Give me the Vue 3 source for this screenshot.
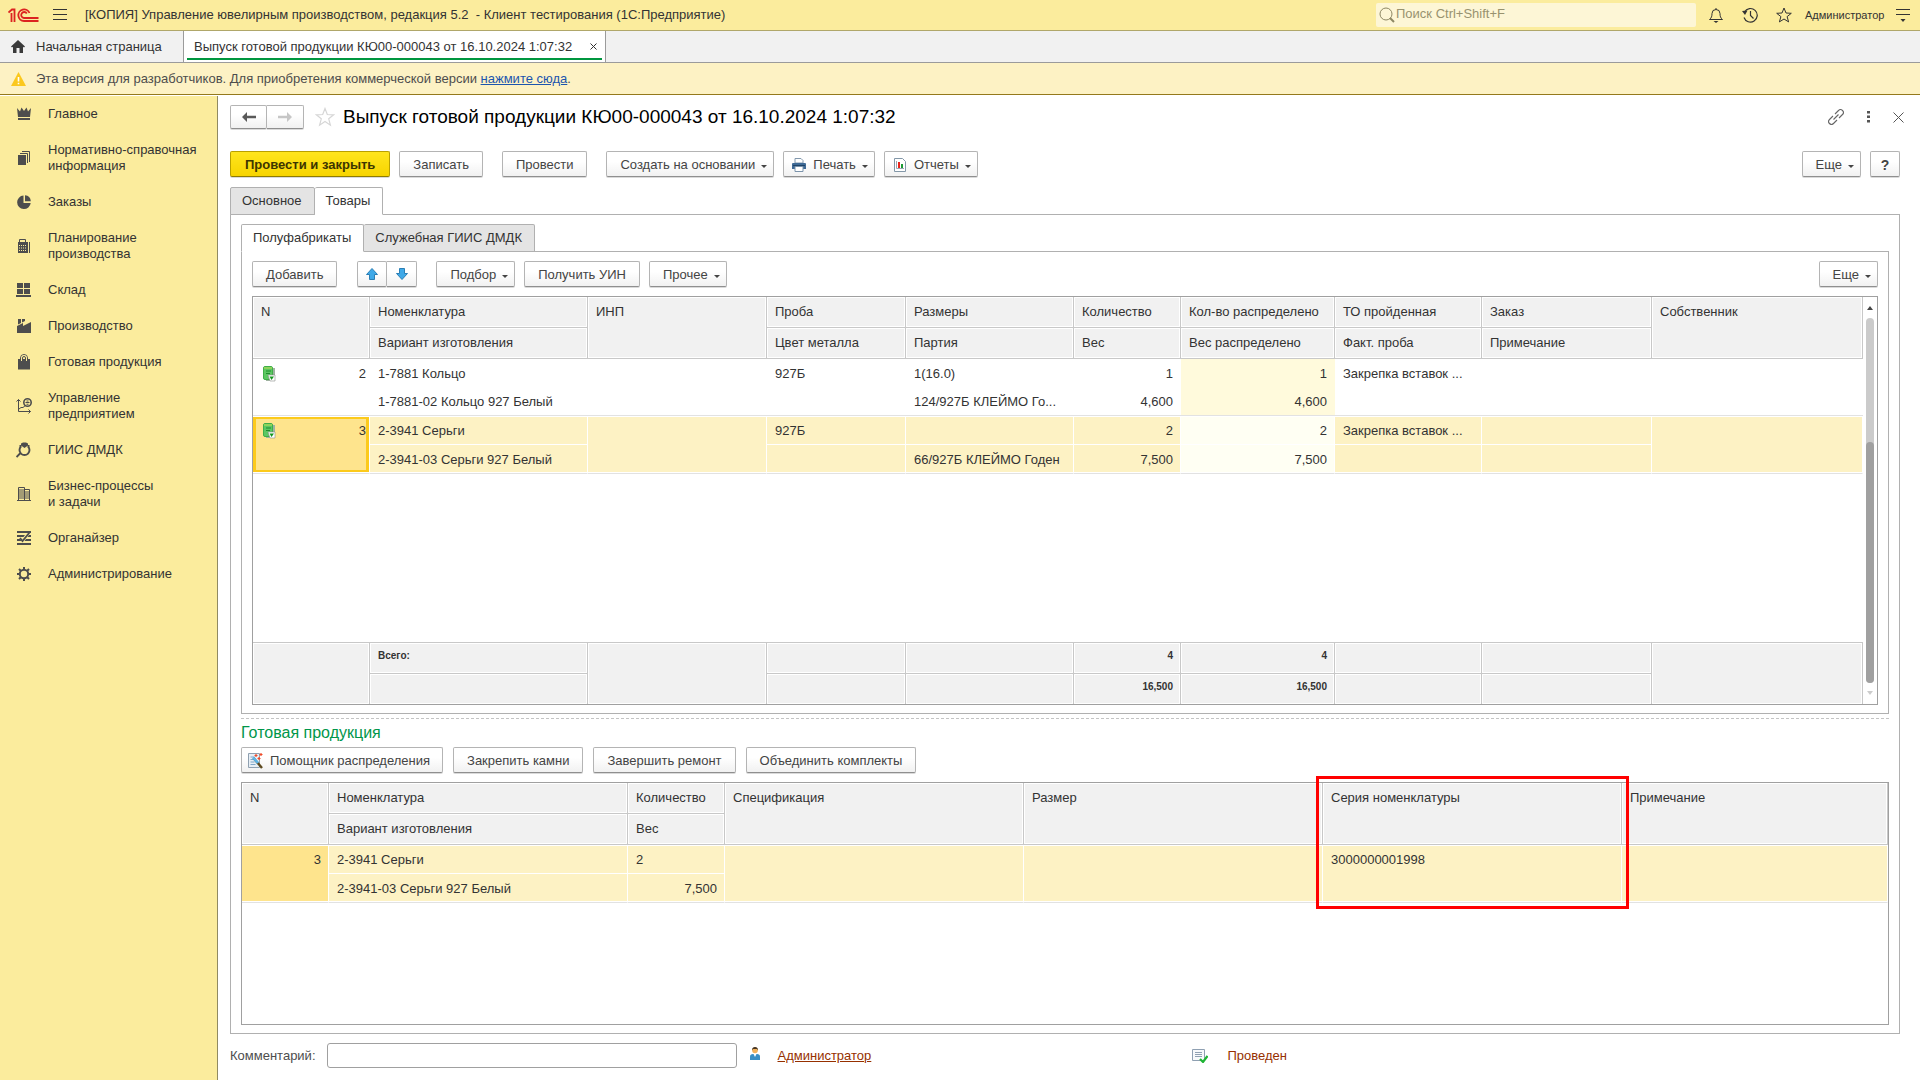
<script setup>
import { ref } from 'vue'

const search = ref('')
const comment = ref('')

const sections = [
  { title: ['Главное'], icon: '<path d="M1 2l3 3.500L5.500 1.500 8 5l2.500-3.500L12 5.500 15 2l-1 9H2z"/><path d="M2 12h12v2H2z"/>' },
  { title: ['Нормативно-справочная', 'информация'], icon: '<path d="M2 5h8v10H2z"/><path d="M4 3.500h7.500V13M6 1.500h7.500V12" fill="none" stroke="#4d4d4d"/>' },
  { title: ['Заказы'], icon: '<path d="M7.500 1.500A6.800 6.800 0 1 0 14.700 9H7.500z"/><path d="M9 1.200A6.500 6.500 0 0 1 14.800 7.200H9z"/>' },
  { title: ['Планирование', 'производства'], icon: '<path d="M3.500 5V1.500h6V5" fill="none" stroke="#4d4d4d"/><path fill-rule="evenodd" d="M2 4h10v11H2zM3 7v1h1V7zm2 0v1h1V7zm2 0v1h1V7zm2 0v1h1V7zM3 9.500v1h1v-1zm2 0v1h1v-1zm2 0v1h1v-1zm2 0v1h1v-1zM3 12v1h1v-1zm2 0v1h1v-1zm2 0v1h1v-1zm2 0v1h1v-1z"/><path d="M13 4h1v11h-1z"/>' },
  { title: ['Склад'], icon: '<path d="M1 1h6v5H1zM8 1h6v5H8zM1 7h6v5H1zM8 7h6v5H8zM0 13h15v2H0z"/>' },
  { title: ['Производство'], icon: '<path d="M2 1h3v4L2 6.500zM6 1h3v2L6 4.500z"/><path d="M1 8l6-3v3l8-4v11H1z"/>' },
  { title: ['Готовая продукция'], icon: '<path d="M2 5h12v10.500H2z"/><path d="M4.500 6V4a3.500 3.500 0 0 1 7 0v2" fill="none" stroke="#4d4d4d"/><path d="M5.500 7V4a2.500 2.500 0 0 1 5 0v3" fill="none" stroke="#fbec9d"/><path d="M6.500 5V4a1.500 1.500 0 0 1 3 0v1" fill="none" stroke="#4d4d4d"/>' },
  { title: ['Управление', 'предприятием'], icon: '<path d="M2.500 1.500v12h12M.500 3.500l2-2 2 2M12.500 11.500l2 2-2 2M3 11l2-1.500 2 0 3-2.500" fill="none" stroke="#4d4d4d"/><circle cx="11.500" cy="4.500" r="3.700" fill="none" stroke="#4d4d4d" stroke-width="1.600"/><path d="M9.500 4h4v1h-4zM10.500 2.500h2v1h-2zM10.500 5.700h2v1h-2z"/>' },
  { title: ['ГИИС ДМДК'], icon: '<path d="M5 1.500L7 .500h3l2 1v2L8.500 6 5 3.500z"/><path d="M5 4.500a5 5 0 1 0 7 0M3.500 4h2M11.500 4h2M4.500 11L.500 15" fill="none" stroke="#4d4d4d" stroke-width="1.900"/>' },
  { title: ['Бизнес-процессы', 'и задачи'], icon: '<path d="M2.500 14V1.500h6V14M9 3.500h4.500V14M3 4h5M3 6h5M3 8h5M3 10h5M3 12h5M9 6h4.500M9 8h4.500M9 10h4.500M9 12h4.500M1 14.500h14" fill="none" stroke="#4d4d4d"/>' },
  { title: ['Органайзер'], icon: '<path d="M1 1h14v2H1zM1 5h8L7.500 7H1zM1 9h3l1.500 2H1zM1 13h14v2H1zM13 5h2v2h-3.500zM10 9h5v2H8.500z"/><path d="M4 8l2.500 3L13.500 2.500" fill="none" stroke="#4d4d4d" stroke-width="1.800"/>' },
  { title: ['Администрирование'], icon: '<circle cx="8" cy="8" r="4.200" fill="none" stroke="#4d4d4d" stroke-width="2"/><path d="M8 1v3M8 12v3M1 8h3M12 8h3M3 3l2.200 2.200M10.800 10.800L13 13M3 13l2.200-2.200M10.800 5.200L13 3" stroke="#4d4d4d" stroke-width="2"/>' },
]

const goods = [
  {
    n: 2, name: '1-7881 Кольцо', variant: '1-7881-02 Кольцо 927 Белый', probe: '927Б', size: '1(16.0)',
    batch: '124/927Б КЛЕЙМО Го...', qty: '1', weight: '4,600', op: 'Закрепка вставок ...', selected: false,
  },
  {
    n: 3, name: '2-3941 Серьги', variant: '2-3941-03 Серьги 927 Белый', probe: '927Б', size: '',
    batch: '66/927Б КЛЕЙМО Годен', qty: '2', weight: '7,500', op: 'Закрепка вставок ...', selected: true,
  },
]
</script>

<template>
  <div class="app">
    <header class="titlebar">
      <svg class="logo" width="31" height="15" viewBox="0 0 31 15" fill="none" stroke="#dc2320" stroke-width="1.800">
        <path d="M.500 4.500L4 1.500h2.500V14M3.500 5v9" />
        <path d="M21.500 5A5.800 5.800 0 1 0 16 13h14.500" />
        <path d="M18.800 5.500A3 3 0 1 0 16 10h14.500" />
      </svg>
      <button class="plain burger" aria-label="Меню">
        <svg width="14" height="14" viewBox="0 0 14 14" stroke="#333"><path d="M0 1.500h14M0 6.500h14M0 11.500h14" /></svg>
      </button>
      <span class="app-name">[КОПИЯ] Управление ювелирным производством, редакция 5.2 &nbsp;- Клиент тестирования (1С:Предприятие)</span>
      <label class="search">
        <svg width="16" height="16" viewBox="0 0 16 16" fill="none" stroke="#8d8763">
          <circle cx="7" cy="7" r="6" /><path d="M11 11l4 4" stroke-width="2" />
        </svg>
        <input v-model="search" type="text" placeholder="Поиск Ctrl+Shift+F" aria-label="Поиск" />
      </label>
      <div class="title-tools">
        <button class="plain" aria-label="Уведомления">
          <svg width="16" height="16" viewBox="0 0 16 16" fill="none" stroke="#333">
            <path d="M8 1v1.500M1.500 12.500c2-1.500 2.500-3.500 2.500-6a4 4 0 0 1 8 0c0 2.500.500 4.500 2.500 6z" /><path d="M5.500 14h5L8 16z" fill="#333" stroke="none" />
          </svg>
        </button>
        <button class="plain" aria-label="История">
          <svg width="16" height="16" viewBox="0 0 16 16" fill="none" stroke="#333">
            <path d="M2.500 5A6.800 6.800 0 1 1 2 10.500M8.500 4v4.500l3 3" stroke-width="1.200" /><path d="M0 4l5.500-.500L3 8z" fill="#333" stroke="none" />
          </svg>
        </button>
        <button class="plain" aria-label="Избранное">
          <svg width="16" height="16" viewBox="0 0 16 16" fill="none" stroke="#333">
            <path d="M8 1l2 5 5.300.300-4.200 3.300 1.500 5.300L8 12l-4.600 2.900 1.500-5.300L.700 6.300 6 6z" />
          </svg>
        </button>
      </div>
      <span class="user">Администратор</span>
      <button class="plain" aria-label="Настройки">
        <svg width="14" height="14" viewBox="0 0 14 14"><path d="M0 1.500h14M0 6.500h14" stroke="#333" /><path d="M4.500 11h5L7 14z" fill="#333" /></svg>
      </button>
    </header>

    <nav class="windows">
      <a href="#" class="window home">
        <svg width="14" height="13" viewBox="0 0 14 13" fill="#3a3a3a"><path d="M7 0l7 6.500-1 1-1-.800V13H8.500V8h-3v5H2V6.700l-1 .800-1-1z" /></svg>
        <span>Начальная страница</span>
      </a>
      <a href="#" class="window current">
        <span>Выпуск готовой продукции КЮ00-000043 от 16.10.2024 1:07:32</span>
        <svg width="7" height="7" viewBox="0 0 7 7" stroke="#333"><path d="M.500.500l6 6M6.500.500l-6 6" /></svg>
      </a>
    </nav>

    <div class="notice">
      <svg width="15" height="14" viewBox="0 0 15 14"><path d="M7.500 0L15 14H0z" fill="#fbc81e" /><path d="M6.700 5h1.600v4.500H6.700zM6.700 10.700h1.600v1.600H6.700z" fill="#fff" /></svg>
      <span>Эта версия для разработчиков. Для приобретения коммерческой версии <a href="#">нажмите сюда</a>.</span>
    </div>

    <div class="workspace">
      <aside class="sidebar">
        <a v-for="s in sections" :key="s.title[0]" href="#" class="section">
          <svg width="16" height="16" viewBox="0 0 16 16" fill="#4d4d4d" v-html="s.icon"></svg>
          <span><span v-for="line in s.title" :key="line" class="line">{{ line }}</span></span>
        </a>
      </aside>

      <main class="doc">
        <div class="doc-head">
          <div class="pair nav">
            <button class="btn" aria-label="Назад"><svg width="14" height="10" viewBox="0 0 14 10" fill="#595959"><path d="M0 5l5-5v3.800h9v2.400H5V10z" /></svg></button>
            <button class="btn" aria-label="Вперед"><svg width="14" height="10" viewBox="0 0 14 10" fill="#c6c6c6"><path d="M14 5L9 0v3.800H0v2.400h9V10z" /></svg></button>
          </div>
          <svg class="fav" width="20" height="20" viewBox="0 0 20 20" fill="none" stroke="#d6d6d6" stroke-width="1.200"><path d="M10 1.500l2.300 6 6.400.300-5 4 1.700 6.400L10 14.500l-5.400 3.700 1.700-6.400-5-4 6.400-.300z" /></svg>
          <h1>Выпуск готовой продукции КЮ00-000043 от 16.10.2024 1:07:32</h1>
          <div class="doc-tools">
            <button class="plain" aria-label="Ссылка">
              <svg width="16" height="16" viewBox="0 0 16 16" fill="none" stroke="#666"><path d="M7 5l3.500-3.500a2.800 2.800 0 0 1 4 4L11 9M9 11l-3.500 3.500a2.800 2.800 0 0 1-4-4L5 7M5.500 10.500l5-5" stroke-width="1.100" /></svg>
            </button>
            <button class="plain" aria-label="Действия">
              <svg width="3" height="12" viewBox="0 0 3 12" fill="#555"><path d="M0 0h3v2.500H0zM0 4.500h3V7H0zM0 9h3v2.500H0z" /></svg>
            </button>
            <button class="plain" aria-label="Закрыть">
              <svg width="11" height="11" viewBox="0 0 11 11" stroke="#555"><path d="M.500.500l10 10M10.500.500l-10 10" /></svg>
            </button>
          </div>
        </div>

        <div class="toolbar commands">
          <button class="btn primary">Провести и закрыть</button>
          <button class="btn">Записать</button>
          <button class="btn apart">Провести</button>
          <button class="btn apart menu">Создать на основании<i class="caret"></i></button>
          <button class="btn menu iconed">
            <svg width="14" height="14" viewBox="0 0 14 14"><path d="M3 .500h6l2 2V5H3z" fill="#fff" stroke="#8298ad" /><path d="M0 5.500Q0 5 1 5h12q1 0 1 .500V11H0z" fill="#3f6a96" /><path d="M1 7h12v1H1z" fill="#1f4468" /><path d="M3 8.500h8v5H3z" fill="#fff" stroke="#7b93ab" /></svg>
            Печать<i class="caret"></i>
          </button>
          <button class="btn menu iconed">
            <svg width="14" height="14" viewBox="0 0 14 14"><path d="M1.500.500h8l3 3v10h-11z" fill="#fff" stroke="#8397a8" /><path d="M3.500 3v7.500H11" fill="none" stroke="#9aa8b4" /><path d="M5 4h2v6H5z" fill="#e8251c" /><path d="M8 6h2v4H8z" fill="#1a9a33" /></svg>
            Отчеты<i class="caret"></i>
          </button>
          <span class="grow"></span>
          <button class="btn menu">Еще<i class="caret"></i></button>
          <button class="btn help">?</button>
        </div>

        <div class="tabs">
          <button class="tab">Основное</button>
          <button class="tab active">Товары</button>
        </div>
        <section class="panel outer">
          <div class="tabs">
            <button class="tab active">Полуфабрикаты</button>
            <button class="tab">Служебная ГИИС ДМДК</button>
          </div>
          <div class="panel inner">
            <div class="toolbar">
              <button class="btn">Добавить</button>
              <div class="pair arrows">
                <button class="btn" aria-label="Вверх"><svg width="12" height="12" viewBox="0 0 12 12"><path d="M6 .500L11.500 6.500H8.500v5h-5v-5H.500z" fill="#3fa9e8" stroke="#2b7fb5" /></svg></button>
                <button class="btn" aria-label="Вниз"><svg width="12" height="12" viewBox="0 0 12 12"><path d="M6 11.500L11.500 5.500H8.500v-5h-5v5H.500z" fill="#3fa9e8" stroke="#2b7fb5" /></svg></button>
              </div>
              <button class="btn menu">Подбор<i class="caret"></i></button>
              <button class="btn">Получить УИН</button>
              <button class="btn menu">Прочее<i class="caret"></i></button>
              <span class="grow"></span>
              <button class="btn menu">Еще<i class="caret"></i></button>
            </div>

            <div class="grid-box">
              <table class="grid goods">
                <colgroup>
                  <col class="g-n" /><col class="g-name" /><col class="g-inp" /><col class="g-probe" /><col class="g-size" />
                  <col class="g-qty" /><col class="g-dist" /><col class="g-op" /><col class="g-order" /><col class="g-owner" />
                </colgroup>
                <thead>
                  <tr>
                    <th rowspan="2">N</th><th>Номенклатура</th><th rowspan="2">ИНП</th><th>Проба</th><th>Размеры</th>
                    <th>Количество</th><th>Кол-во распределено</th><th>ТО пройденная</th><th>Заказ</th><th rowspan="2">Собственник</th>
                  </tr>
                  <tr>
                    <th>Вариант изготовления</th><th>Цвет металла</th><th>Партия</th><th>Вес</th>
                    <th>Вес распределено</th><th>Факт. проба</th><th>Примечание</th>
                  </tr>
                </thead>
                <tbody v-for="g in goods" :key="g.n" :class="{ selected: g.selected }">
                  <tr class="upper">
                    <td rowspan="2" class="mark">
                      <div class="mark-row">
                        <svg width="13" height="16" viewBox="0 0 13 16"><path d="M2 2h10v13H3z" fill="#9fb3a0" /><rect x=".5" y=".5" width="9" height="13" rx="1.500" fill="#5cc763" stroke="#3fae49" /><path d="M1 1h8v2H1z" fill="#8fd35c" /><path d="M3 5h5M3 7.500h4" stroke="#1f8a2e" /><path d="M5 9h7v6H7z" fill="#fff" stroke="#8b8f8b" stroke-width=".6" /><path d="M6.500 10.500L8.500 14l2.500-3.500z" fill="#14961f" /></svg>
                        <span>{{ g.n }}</span>
                      </div>
                    </td>
                    <td>{{ g.name }}</td><td rowspan="2"></td><td>{{ g.probe }}</td><td>{{ g.size }}</td>
                    <td class="num">{{ g.qty }}</td><td class="num dist">{{ g.qty }}</td><td>{{ g.op }}</td><td></td><td rowspan="2"></td>
                  </tr>
                  <tr class="lower">
                    <td>{{ g.variant }}</td><td></td><td>{{ g.batch }}</td>
                    <td class="num">{{ g.weight }}</td><td class="num dist">{{ g.weight }}</td><td></td><td></td>
                  </tr>
                </tbody>
                <tbody><tr class="blank"><td colspan="10"></td></tr></tbody>
                <tfoot>
                  <tr>
                    <td rowspan="2"></td><td>Всего:</td><td rowspan="2"></td><td></td><td></td>
                    <td class="num">4</td><td class="num">4</td><td></td><td></td><td rowspan="2"></td>
                  </tr>
                  <tr>
                    <td></td><td></td><td></td><td class="num">16,500</td><td class="num">16,500</td><td></td><td></td>
                  </tr>
                </tfoot>
              </table>
              <div class="scroll">
                <svg width="6" height="4" viewBox="0 0 6 4" fill="#444"><path d="M0 4l3-4 3 4z" /></svg>
                <div class="track"><div class="thumb"></div></div>
                <svg width="6" height="4" viewBox="0 0 6 4" fill="#ccc"><path d="M0 0l3 4 3-4z" /></svg>
              </div>
            </div>
          </div>

          <div class="splitter"></div>
          <h2>Готовая продукция</h2>
          <div class="toolbar products">
            <button class="btn helper">
              <svg width="16" height="16" viewBox="0 0 16 16"><path d="M.500.500h11v14H.500z" fill="#e8eff5" stroke="#8fa0b0" /><path d="M2.500 4h4M2.500 6.500h4M2.500 9h4M2.500 11.500h5" stroke="#7fa6c9" /><path d="M5.500 5L14 15" stroke="#5d4a20" stroke-width="2.400" /><path d="M5 4.500l5 5.500" stroke="#5bb4e8" stroke-width="2.600" /><path d="M8 1v3M6.500 2.500h3M13 0v3M11.500 1.500h3M11 4v3M9.500 5.500h3" stroke="#ef4b2a" stroke-width="1.200" /></svg>
              Помощник распределения
            </button>
            <button class="btn">Закрепить камни</button>
            <button class="btn">Завершить ремонт</button>
            <button class="btn">Объединить комплекты</button>
          </div>
          <div class="grid-box fill">
            <table class="grid">
              <colgroup>
                <col class="p-n" /><col class="p-wide" /><col class="p-qty" /><col class="p-wide" /><col class="p-wide" /><col class="p-wide" /><col class="p-note" />
              </colgroup>
              <thead>
                <tr>
                  <th rowspan="2">N</th><th>Номенклатура</th><th>Количество</th><th rowspan="2">Спецификация</th><th rowspan="2">Размер</th>
                  <th rowspan="2" class="series">Серия номенклатуры<div class="frame"></div></th><th rowspan="2">Примечание</th>
                </tr>
                <tr><th>Вариант изготовления</th><th>Вес</th></tr>
              </thead>
              <tbody class="selected">
                <tr class="upper">
                  <td rowspan="2" class="num key">3</td><td>2-3941 Серьги</td><td>2</td><td rowspan="2"></td><td rowspan="2"></td>
                  <td rowspan="2">3000000001998</td><td rowspan="2"></td>
                </tr>
                <tr class="lower"><td>2-3941-03 Серьги 927 Белый</td><td class="num">7,500</td></tr>
              </tbody>
            </table>
          </div>
        </section>

        <footer class="foot">
          <label for="comment">Комментарий:</label>
          <input id="comment" v-model="comment" type="text" />
          <svg class="person" width="10" height="13" viewBox="0 0 10 13"><path d="M0 13V9.500Q0 7 3 7h4q3 0 3 2.500V13z" fill="#3a8fc4" /><path d="M3.500 7h3L5 10z" fill="#fff" /><circle cx="5" cy="3.500" r="2.800" fill="#f2b25c" /><path d="M2 3.500Q1.800 0 5 0t3 3.500L7 2H3z" fill="#4a3520" /></svg>
          <a href="#" class="author">Администратор</a>
          <span class="status">
            <svg width="16" height="14" viewBox="0 0 16 14"><path d="M.500.500h12v11H.500z" fill="#f7f9fb" stroke="#8fa0b2" /><path d="M3 3.500h7M3 5.500h7M3 7.500h7" stroke="#8fa0b2" /><path d="M8 10l3 3 4.500-6" fill="none" stroke="#1fb535" stroke-width="2.200" /></svg>
            <span>Проведен</span>
          </span>
        </footer>
      </main>
    </div>
  </div>
</template>

<style>
body {
  margin: 0;
  background: #fff;
}
</style>

<style scoped>
* {
  box-sizing: border-box;
}
.app {
  min-height: 100vh;
  display: flex;
  flex-direction: column;
  font: 13px/16px "Liberation Sans", Arial, sans-serif;
  color: #333;
}
svg {
  display: block;
  flex: none;
}
button, input {
  font: inherit;
  color: inherit;
}
.plain {
  padding: 0;
  border: 0;
  background: none;
}
.titlebar {
  display: flex;
  align-items: center;
  height: 31px;
  padding: 0 10px 0 8px;
  background: #fbec9d;
  border-bottom: 1px solid #b0a76a;
}
.burger {
  margin: 0 18px 0 14px;
}
.app-name {
  flex: 1;
  white-space: nowrap;
}
.search {
  display: flex;
  align-items: center;
  width: 320px;
  height: 24px;
  padding-left: 3px;
  background: #fdf6d6;
  border-radius: 2px;
}
.search input {
  flex: 1;
  min-width: 0;
  padding: 0 0 2px 1px;
  border: 0;
  background: none;
  outline: 0;
}
.search input::placeholder {
  color: #98926f;
  opacity: 1;
}
.title-tools {
  display: flex;
  gap: 18px;
  margin: 0 13px 0 12px;
}
.user {
  width: 78px;
  margin-right: 13px;
  font-size: 11px;
}
.windows {
  display: flex;
  height: 32px;
  background: #f1f1f1;
  border-bottom: 1px solid #9b9b9b;
}
.window {
  display: flex;
  align-items: center;
  color: inherit;
  text-decoration: none;
  white-space: nowrap;
  border-right: 1px solid #9b9b9b;
}
.home {
  gap: 11px;
  width: 184px;
  padding-left: 11px;
}
.current {
  position: relative;
  gap: 18px;
  padding: 0 8px 0 10px;
  background: #fff;
}
.current::after {
  content: "";
  position: absolute;
  left: 3px;
  right: 3px;
  bottom: 2px;
  height: 2px;
  background: #00963f;
}
.notice {
  display: flex;
  align-items: center;
  gap: 10px;
  height: 32px;
  padding-left: 11px;
  color: #4d4d4d;
  background: #fdf2c4;
  border-bottom: 1px solid #94791c;
}
.notice a {
  color: #1c55ae;
}
.workspace {
  flex: 1;
  display: flex;
}
.sidebar {
  width: 218px;
  flex: none;
  margin-top: 1px;
  background: #fbec9d;
  border-right: 1px solid #908a62;
}
.section {
  display: flex;
  align-items: center;
  gap: 16px;
  padding: 10px 0 10px 16px;
  color: inherit;
  text-decoration: none;
}
.line {
  display: block;
}
.doc {
  flex: 1;
  min-width: 0;
  display: flex;
  flex-direction: column;
  padding: 10px 20px 12px 12px;
}
.doc-head {
  display: flex;
  align-items: center;
  height: 24px;
  margin-bottom: 22px;
}
h1 {
  flex: 1;
  margin: 0;
  font-size: 19px;
  line-height: 24px;
  font-weight: normal;
  color: #000;
}
.fav {
  margin: 0 8px 0 11px;
}
.doc-tools {
  display: flex;
  align-items: center;
  gap: 23px;
  margin-right: -4px;
}
.btn {
  display: flex;
  align-items: center;
  justify-content: center;
  height: 26px;
  padding: 1px 13px 0;
  color: #444;
  white-space: nowrap;
  background: linear-gradient(#fff 40%, #f1f1f1);
  border: 1px solid #b4b4b4;
  border-bottom-color: #8f8f8f;
  border-radius: 2px;
  box-shadow: 0 1px 0 #dadada;
}
.primary {
  padding: 1px 14px 0;
  font-weight: bold;
  color: #3d3500;
  background: linear-gradient(#ffe51e, #f7d400);
  border-color: #b9a000;
  border-bottom-color: #8f7c00;
}
.menu {
  padding-right: 6px;
}
.caret {
  margin: 3px 0 0 6px;
  border: 3px solid transparent;
  border-top-color: #444;
  border-bottom: 0;
}
.iconed {
  padding-left: 8px;
}
.iconed svg {
  margin-right: 7px;
}
.help {
  width: 30px;
  padding: 1px 0 0;
  font-size: 14px;
  font-weight: bold;
}
.pair {
  display: flex;
}
.pair .btn {
  padding: 0;
}
.pair .btn + .btn {
  border-left: 0;
  border-radius: 0 2px 2px 0;
}
.nav .btn {
  width: 37px;
  height: 24px;
}
.arrows {
  margin: 0 10px 0 11px;
}
.arrows .btn {
  width: 30px;
}
.toolbar {
  display: flex;
  gap: 9px;
}
.apart {
  margin-left: 10px;
}
.grow {
  flex: 1;
}
.commands {
  margin-bottom: 10px;
}
.tabs {
  display: flex;
  position: relative;
  margin-bottom: -1px;
}
.tab {
  height: 28px;
  padding: 0 12px 0 11px;
  border: 1px solid #b0b0b0;
  background: #e4e4e4;
  border-radius: 2px 2px 0 0;
}
.tab + .tab {
  border-left: 0;
}
.tab.active {
  background: #fff;
  border-bottom-color: #fff;
}
.panel {
  border: 1px solid #b0b0b0;
}
.outer {
  flex: 1;
  display: flex;
  flex-direction: column;
  padding: 9px 10px 8px;
}
.inner {
  padding: 9px 10px 8px;
}
.grid-box {
  display: flex;
  align-items: flex-start;
  margin-top: 9px;
  border: 1px solid #a0a0a0;
}
.fill {
  flex: 1;
}
.grid {
  flex: 1;
  width: 100%;
  table-layout: fixed;
  border-collapse: separate;
  border-spacing: 0;
}
.g-n { width: 117px; }
.g-name { width: 218px; }
.g-inp { width: 179px; }
.g-probe { width: 139px; }
.g-size { width: 168px; }
.g-qty { width: 107px; }
.g-dist { width: 154px; }
.g-op { width: 147px; }
.g-order { width: 170px; }
.g-owner { width: 211px; }
.p-n { width: 87px; }
.p-wide { width: 299px; }
.p-qty { width: 97px; }
.p-note { width: 266px; }
th, td {
  height: 31px;
  padding: 2px 7px 0 8px;
  line-height: 26px;
  text-align: left;
  vertical-align: top;
  font-weight: normal;
  white-space: nowrap;
}
th {
  padding-top: 0;
  line-height: 30px;
  background: #f1f1f1;
  border-right: 1px solid #c8c8c8;
  border-bottom: 1px solid #c8c8c8;
  box-shadow: inset 0 0 0 1px #fff;
}
.num {
  text-align: right;
}
td.num {
  padding-right: 8px;
}
.upper td {
  height: 28px;
}
.lower td {
  height: 29px;
}
.lower td, .upper td[rowspan] {
  border-bottom: 1px solid #e2e2e2;
}
.dist {
  background: #fffadc;
}
.selected .upper td {
  height: 29px;
}
.selected td {
  background: #fdf2c4;
  border-right: 1px solid #fff;
  box-shadow: inset 0 -1px 0 #fff;
}
.selected .upper td {
  box-shadow: inset 0 1px 0 #fff, inset 0 -1px 0 #fff;
}
.selected td.num {
  padding-right: 7px;
}
.selected .dist {
  background: #fffff3;
}
.upper .mark {
  padding: 2px 0 0;
}
.mark-row {
  display: flex;
  justify-content: space-between;
  align-items: center;
  height: 26px;
  padding: 0 4px 0 10px;
}
.selected .upper .mark {
  background: #fee48d;
  box-shadow: inset 0 1px 0 #fff, inset 0 -1px 0 #fff, inset 0 0 0 3px #fcca1c;
}
.selected .mark-row {
  padding-right: 3px;
}
.selected .key {
  background: #fee48d;
}
.goods .blank td {
  height: 168px;
}
tfoot td {
  padding-top: 0;
  font-size: 10px;
  font-weight: bold;
  background: #f1f1f1;
  border-top: 1px solid #c8c8c8;
  border-right: 1px solid #c8c8c8;
  box-shadow: inset 0 0 0 1px #fff;
}
tfoot td.num {
  padding-right: 7px;
}
.scroll {
  width: 14px;
  align-self: stretch;
  display: flex;
  flex-direction: column;
  align-items: center;
  gap: 8px;
  padding: 9px 0;
}
.track {
  flex: 1;
  display: flex;
  align-items: flex-end;
  width: 8px;
  border-radius: 4px;
  background: #cbcbcb;
}
.thumb {
  width: 8px;
  height: 66%;
  border-radius: 4px;
  background: #a0a0a0;
}
.splitter {
  margin-top: 4px;
  height: 1px;
  background: repeating-linear-gradient(90deg, #c4c4c4 0 3px, transparent 3px 5px);
}
h2 {
  margin: 4px 0;
  font-size: 16px;
  line-height: 20px;
  font-weight: normal;
  color: #00964a;
}
.products {
  gap: 10px;
}
.helper {
  gap: 6px;
  padding: 1px 12px 0 6px;
}
.series {
  position: relative;
}
.frame {
  position: absolute;
  z-index: 1;
  top: -7px;
  left: -7px;
  right: -8px;
  height: 133px;
  border: 3px solid #f00;
}
.foot {
  display: flex;
  align-items: center;
  margin-top: 9px;
  color: #4d4d4d;
}
.foot input {
  width: 410px;
  height: 25px;
  margin: 0 13px 0 11px;
  padding: 0 6px;
  border: 1px solid #a0a0a0;
  border-radius: 3px;
}
.author {
  width: 414px;
  margin-left: 18px;
  color: #963000;
}
.person {
  margin-bottom: 4px;
}
.status {
  display: flex;
  align-items: center;
  gap: 20px;
  color: #963000;
}
</style>
